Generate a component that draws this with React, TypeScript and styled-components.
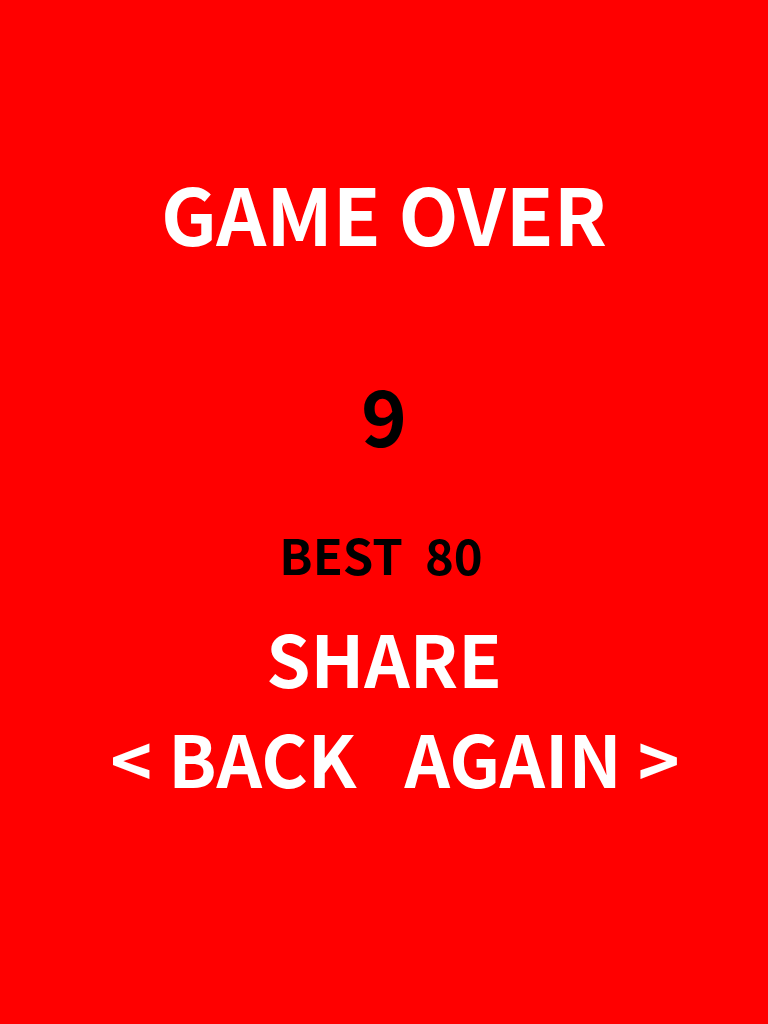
import styled, { createGlobalStyle } from 'styled-components';

const GlobalStyle = createGlobalStyle`
  html, body {
    margin: 0;
    padding: 0;
    background: #ff0000;
  }
  body {
    font-family: 'Noto Sans CJK SC', 'Noto Sans', sans-serif;
  }
`;

export default function App() {
  const score = 9;
  const best = 80;

  return (
    <Screen>
      <GlobalStyle />
      <Title>GAME OVER</Title>
      <Score>{score}</Score>
      <Best>
        BEST<span>{best}</span>
      </Best>
      <Share>SHARE</Share>
      <NavRow>
        <MenuButton>&lt; BACK</MenuButton>
        <MenuButton>AGAIN &gt;</MenuButton>
      </NavRow>
    </Screen>
  );
}

const Screen = styled.div`
  width: 768px;
  height: 1024px;
  background: #ff0000;
  display: flex;
  flex-direction: column;
  align-items: center;
  padding-top: 157px;
  box-sizing: border-box;
`;

const Title = styled.h1`
  margin: 0;
  font-size: 78px;
  font-weight: 700;
  line-height: 110px;
  color: #fff;
`;

const Score = styled.div`
  margin-top: 91px;
  font-size: 78px;
  font-weight: 700;
  line-height: 110px;
  color: #000;
`;

const Best = styled.div`
  margin-top: 54px;
  margin-right: 6px;
  font-size: 49px;
  font-weight: 700;
  line-height: 64px;
  color: #000;

  span {
    margin-left: 22px;
  }
`;

const MenuButton = styled.div`
  font-size: 71px;
  font-weight: 700;
  line-height: 100px;
  color: #fff;
  cursor: pointer;
`;

const Share = styled(MenuButton)`
  margin-top: 21px;
`;

const NavRow = styled.div`
  display: flex;
  gap: 48px;
  margin-left: 22px;
`;
